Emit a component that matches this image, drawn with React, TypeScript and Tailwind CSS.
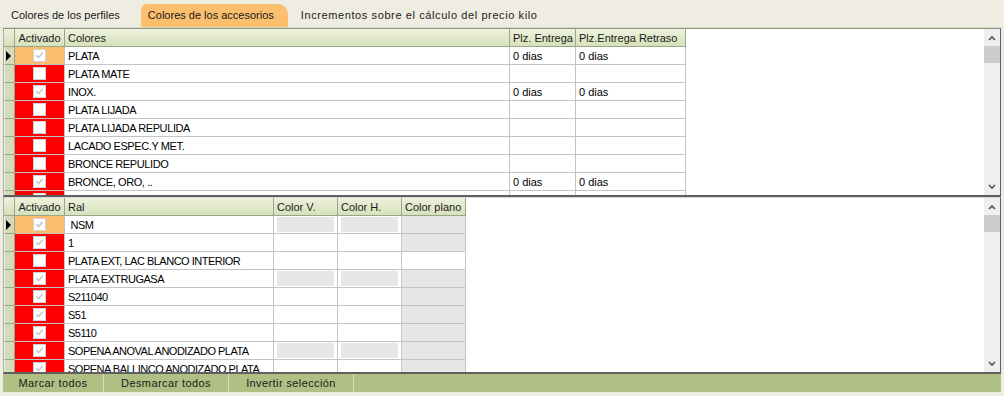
import React from "react";

const FONT = "font-['Liberation_Sans','DejaVu_Sans',sans-serif]";

type Col = { title: string; w: number; center?: boolean };

const COLS1: Col[] = [
  { title: "Activado", w: 50, center: true },
  { title: "Colores", w: 445 },
  { title: "Plz. Entrega", w: 66 },
  { title: "Plz.Entrega Retraso", w: 110 },
];

const COLS2: Col[] = [
  { title: "Activado", w: 50, center: true },
  { title: "Ral", w: 209 },
  { title: "Color V.", w: 64 },
  { title: "Color H.", w: 64 },
  { title: "Color plano", w: 64 },
];

const ROWS1: { on: boolean; name: string; plz: string; ret: string }[] = [
  { on: true, name: "PLATA", plz: "0 dias", ret: "0 dias" },
  { on: false, name: "PLATA MATE", plz: "", ret: "" },
  { on: true, name: "INOX.", plz: "0 dias", ret: "0 dias" },
  { on: false, name: "PLATA LIJADA", plz: "", ret: "" },
  { on: false, name: "PLATA LIJADA REPULIDA", plz: "", ret: "" },
  { on: false, name: "LACADO ESPEC.Y MET.", plz: "", ret: "" },
  { on: false, name: "BRONCE REPULIDO", plz: "", ret: "" },
  { on: true, name: "BRONCE, ORO, ..", plz: "0 dias", ret: "0 dias" },
  { on: true, name: "", plz: "", ret: "" },
];

const ROWS2: { on: boolean; name: string; vh: boolean; plano: boolean }[] = [
  { on: true, name: "\u00a0NSM", vh: true, plano: true },
  { on: true, name: "1", vh: false, plano: true },
  { on: false, name: "PLATA EXT, LAC BLANCO INTERIOR", vh: false, plano: false },
  { on: true, name: "PLATA EXTRUGASA", vh: true, plano: true },
  { on: true, name: "S211040", vh: false, plano: true },
  { on: true, name: "S51", vh: false, plano: true },
  { on: true, name: "S5110", vh: false, plano: true },
  { on: true, name: "SOPENA ANOVAL ANODIZADO PLATA", vh: true, plano: true },
  { on: true, name: "SOPENA BALLINCO ANODIZADO PLATA", vh: false, plano: true },
];

function Check({ on }: { on: boolean }) {
  return (
    <div className="w-[13px] h-[13px] bg-white border border-[#d2d2d2] flex items-center justify-center">
      {on && (
        <svg width="9" height="9" viewBox="0 0 9 9">
          <path d="M1.2 4.2 L3.5 6.6 L7.8 1.8" stroke="#c8c8c8" strokeWidth="1.6" fill="none" />
        </svg>
      )}
    </div>
  );
}

function Selector({ current, header }: { current?: boolean; header?: boolean }) {
  return (
    <div
      className={
        "w-[11px] shrink-0 h-[18px] border-r border-b border-[#9aa58a] flex items-center " +
        (header ? "bg-gradient-to-b from-[#edf1dd] to-[#d6e0b8]" : "bg-[#d4dbbb] border-l border-l-[#eef1e2]")
      }
    >
      {current && (
        <svg width="6" height="10" viewBox="0 0 6 10" className="ml-[1px]">
          <path d="M0 0 L5 5 L0 10 Z" fill="#000" />
        </svg>
      )}
    </div>
  );
}

function HeaderRow({ cols }: { cols: Col[] }) {
  return (
    <div className="flex shrink-0">
      <Selector header />
      {cols.map((c) => (
        <div
          key={c.title}
          style={{ width: c.w }}
          className={
            "shrink-0 h-[18px] border-r border-b border-[#9aa58a] bg-gradient-to-b from-[#eef2de] to-[#d7e1ba] px-[3px] leading-[18px] text-[11px] text-[#1a1a1a] whitespace-nowrap overflow-hidden " +
            (c.center ? "text-center" : "")
          }
        >
          {c.title}
        </div>
      ))}
    </div>
  );
}

function Cell({ w, children, className = "" }: { w: number; children?: React.ReactNode; className?: string }) {
  return (
    <div
      style={{ width: w }}
      className={
        "shrink-0 h-[18px] border-r border-b border-[#c4c4c4] px-[3px] leading-[18px] text-[11px] text-black whitespace-nowrap overflow-hidden " +
        className
      }
    >
      {children}
    </div>
  );
}

function ActCell({ on, current }: { on: boolean; current: boolean }) {
  return (
    <div
      className={
        "w-[50px] shrink-0 h-[18px] border-r border-b border-[#c4c4c4] flex items-center justify-center " +
        (current ? "bg-[#fbbd6d]" : "bg-[#ff0000]")
      }
    >
      <Check on={on} />
    </div>
  );
}

function Scrollbar() {
  return (
    <div className="w-[16px] shrink-0 bg-[#efefef] flex flex-col items-center">
      <div className="h-[17px] w-full flex items-center justify-center">
        <svg width="8" height="6" viewBox="0 0 8 6">
          <path d="M1 5 L4 2 L7 5" stroke="#555" strokeWidth="1.6" fill="none" />
        </svg>
      </div>
      <div className="h-[17px] w-full bg-[#cdcdcd]" />
      <div className="flex-1" />
      <div className="h-[16px] w-full flex items-center justify-center">
        <svg width="8" height="6" viewBox="0 0 8 6">
          <path d="M1 1 L4 4 L7 1" stroke="#555" strokeWidth="1.6" fill="none" />
        </svg>
      </div>
    </div>
  );
}

function Grid({ children, className = "" }: { children: React.ReactNode; className?: string }) {
  return (
    <div
      className={
        "flex bg-white border-l border-l-[#a9ad9c] border-r border-r-[#5f5f5f] border-b-2 border-b-[#5f5f5f] overflow-hidden " +
        className
      }
    >
      <div className="flex-1 flex flex-col overflow-hidden">{children}</div>
      <Scrollbar />
    </div>
  );
}

function GrayBox() {
  return <div className="h-[15px] w-full bg-[#e6e6e6]" />;
}

export default function App() {
  return (
    <div className={"w-[1004px] h-[396px] bg-[#efede1] flex flex-col overflow-hidden " + FONT}>
      {/* Tabs */}
      <div className="h-[28px] shrink-0 flex items-end pl-[3px] text-[11px] text-[#1a1a1a] border-b border-b-[#d9dcc6]">
        <div className="h-[23px] px-[8px] leading-[23px]">Colores de los perfiles</div>
        <div className="h-[23px] ml-[13px] pl-[7px] pr-[14px] leading-[23px] bg-[#fbbf6d] rounded-tl-[6px] rounded-tr-[10px]">
          Colores de los accesorios
        </div>
        <div className="h-[23px] pl-[13px] leading-[23px] tracking-[0.6px]">
          Incrementos sobre el cálculo del precio kilo
        </div>
      </div>

      <div className="mx-[3px] flex flex-col flex-1">
        {/* Grid 1 */}
        <Grid className="h-[169px] shrink-0 border-t border-t-[#8d9580]">
          <HeaderRow cols={COLS1} />
          {ROWS1.map((r, i) => (
            <div key={i} className="flex shrink-0">
              <Selector current={i === 0} />
              <ActCell on={r.on} current={i === 0} />
              <Cell w={COLS1[1].w} className="tracking-[-0.4px]">{r.name}</Cell>
              <Cell w={COLS1[2].w}>{r.plz}</Cell>
              <Cell w={COLS1[3].w}>{r.ret}</Cell>
            </div>
          ))}
        </Grid>

        {/* Grid 2 */}
        <Grid className="h-[177px] shrink-0 border-t border-t-[#d8d8d8]">
          <HeaderRow cols={COLS2} />
          {ROWS2.map((r, i) => (
            <div key={i} className="flex shrink-0">
              <Selector current={i === 0} />
              <ActCell on={r.on} current={i === 0} />
              <Cell w={COLS2[1].w} className="tracking-[-0.5px]">{r.name}</Cell>
              <Cell w={COLS2[2].w} className="px-[1px] pt-[1px]">{r.vh && <GrayBox />}</Cell>
              <Cell w={COLS2[3].w} className="px-[1px] pt-[1px]">{r.vh && <GrayBox />}</Cell>
              <Cell w={COLS2[4].w} className={r.plano ? "bg-[#e6e6e6]" : ""} />
            </div>
          ))}
        </Grid>

        {/* Buttons */}
        <div className="h-[18px] shrink-0 bg-[#b0c084] flex text-[11px] text-[#1a1a1a] leading-[18px] tracking-[0.4px]">
          <div className="w-[101px] text-center border-r border-r-[#d6dfbd]">Marcar todos</div>
          <div className="w-[125px] text-center border-r border-r-[#d6dfbd]">Desmarcar todos</div>
          <div className="w-[125px] text-center border-r border-r-[#d6dfbd]">Invertir selección</div>
        </div>
      </div>
    </div>
  );
}
